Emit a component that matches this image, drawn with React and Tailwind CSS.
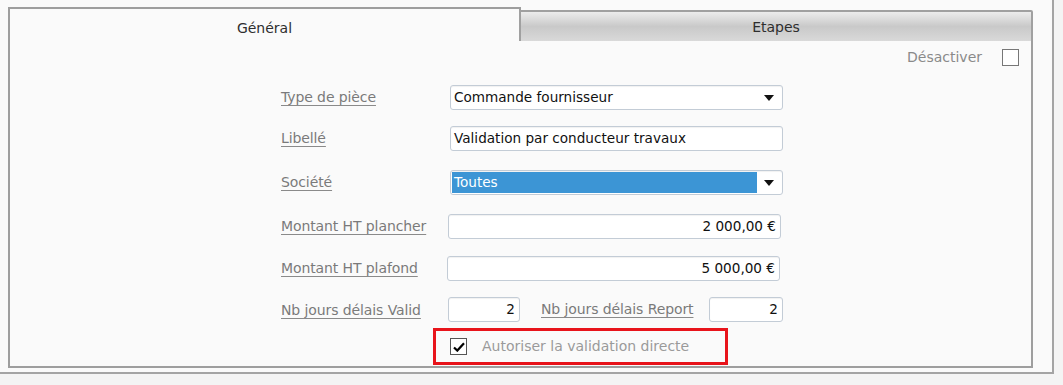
const font = { fontFamily: '"DejaVu Sans", Verdana, sans-serif' };

function Arrow() {
  return (
    <svg width="10" height="6" viewBox="0 0 10 6" className="shrink-0">
      <path d="M0 0 L10 0 L5 6 Z" fill="#111" />
    </svg>
  );
}

function Label({ children, className = "" }) {
  return (
    <span className={"text-[14px] tracking-[-0.1px] text-[#7a7a7a] underline decoration-[#8a8a8a] underline-offset-[3px] whitespace-nowrap " + className}>
      {children}
    </span>
  );
}

const boxCls =
  "h-[25px] border border-[#c3ccd6] rounded-[3px] bg-white shadow-[inset_0_1px_1px_rgba(0,0,0,0.06)] flex items-center text-[13.6px] text-[#111]";

function Row({ label, children, className = "" }) {
  return (
    <div className={"flex items-center h-[25px] " + className}>
      <div className="w-[169px] shrink-0 flex items-center">
        <Label>{label}</Label>
      </div>
      <div className="flex-1 flex">{children}</div>
    </div>
  );
}

export default function App() {
  return (
    <div className="w-[1063px] h-[385px] bg-[#f4f4f4] overflow-hidden" style={font}>
      <div className="w-[1054px] h-[374px] bg-[#fafafa] border-r-2 border-b-2 border-[#a4a4a4] pt-[7px] pl-[8px]">
        <div className="w-[1025px] flex flex-col">
          {/* tabs */}
          <div className="flex h-[35px]">
            <div className="w-[513px] h-[35px] border-l-2 border-t-2 border-r-2 border-[#9e9e9e] bg-[#fafafa] flex items-start justify-center pt-[9px]">
              <span className="text-[14px] text-[#2e2e2e]">Général</span>
            </div>
            <div className="flex-1 mt-[3px] h-[33px] -ml-[2px] border-2 border-[#a0a0a0] rounded-tr-[2px] bg-gradient-to-b from-[#ececec] via-[#c9c9c9] to-[#d9d9d9] flex items-center justify-center pt-[2px]">
              <span className="text-[14px] text-[#2e2e2e]">Etapes</span>
            </div>
          </div>
          {/* content */}
          <div className="h-[327px] -mt-[1px] border-l-2 border-r-2 border-b-2 border-[#9e9e9e] bg-[#fafafa] flex flex-col pt-[8px]">
            <div className="flex items-center justify-end h-[17px] pr-[12px]">
              <span className="text-[14px] text-[#8a8a8a] mr-[20px]">Désactiver</span>
              <span className="w-[17px] h-[17px] border border-[#777] bg-white" />
            </div>

            <div className="ml-[271px] w-[502px] flex flex-col mt-[19px]">
              <Row label="Type de pièce">
                <div className={boxCls + " w-full pl-[3px] pr-[8px] justify-between"}>
                  <span>Commande fournisseur</span>
                  <Arrow />
                </div>
              </Row>
              <Row label="Libellé" className="mt-[16px]">
                <div className={boxCls + " w-full pl-[3px]"}>
                  <span>Validation par conducteur travaux</span>
                </div>
              </Row>
              <Row label="Société" className="mt-[19px]">
                <div className={boxCls + " w-full p-[1px] bg-[#e6f2fc]"}>
                  <div className="h-full flex-1 bg-[#3c95d5] text-white flex items-center pl-[2px]">Toutes</div>
                  <div className="w-[24px] flex justify-center">
                    <Arrow />
                  </div>
                </div>
              </Row>
              <Row label="Montant HT plancher" className="mt-[19px]">
                <div className={boxCls + " w-full pr-[4px] justify-end -ml-[2px]"}>
                  <span>2 000,00 €</span>
                </div>
              </Row>
              <Row label="Montant HT plafond" className="mt-[17px]">
                <div className={boxCls + " w-full pr-[4px] justify-end -ml-[3px]"}>
                  <span>5 000,00 €</span>
                </div>
              </Row>
              <div className="flex items-center h-[25px] mt-[16px]">
                <div className="w-[167px] shrink-0">
                  <Label>Nb jours délais Valid</Label>
                </div>
                <div className={boxCls + " w-[72px] pr-[4px] justify-end"}>
                  <span>2</span>
                </div>
                <Label className="ml-[21px]">Nb jours délais Report</Label>
                <div className={boxCls + " w-[74px] pr-[4px] justify-end ml-auto"}>
                  <span>2</span>
                </div>
              </div>
            </div>

            <div className="ml-[423px] mt-[6px] w-[295px] h-[37px] border-[3px] border-[#e8141b] flex items-center pl-[14px]">
              <span className="w-[17px] h-[17px] border border-[#555] bg-white flex items-center justify-center">
                <svg width="12" height="10" viewBox="0 0 12 10">
                  <path d="M1 5.5 L4.3 8.6 L11 1.2" fill="none" stroke="#000" strokeWidth="2.2" />
                </svg>
              </span>
              <span className="ml-[15px] text-[14px] text-[#9a9a9a]">Autoriser la validation directe</span>
            </div>
          </div>
        </div>
      </div>
    </div>
  );
}
